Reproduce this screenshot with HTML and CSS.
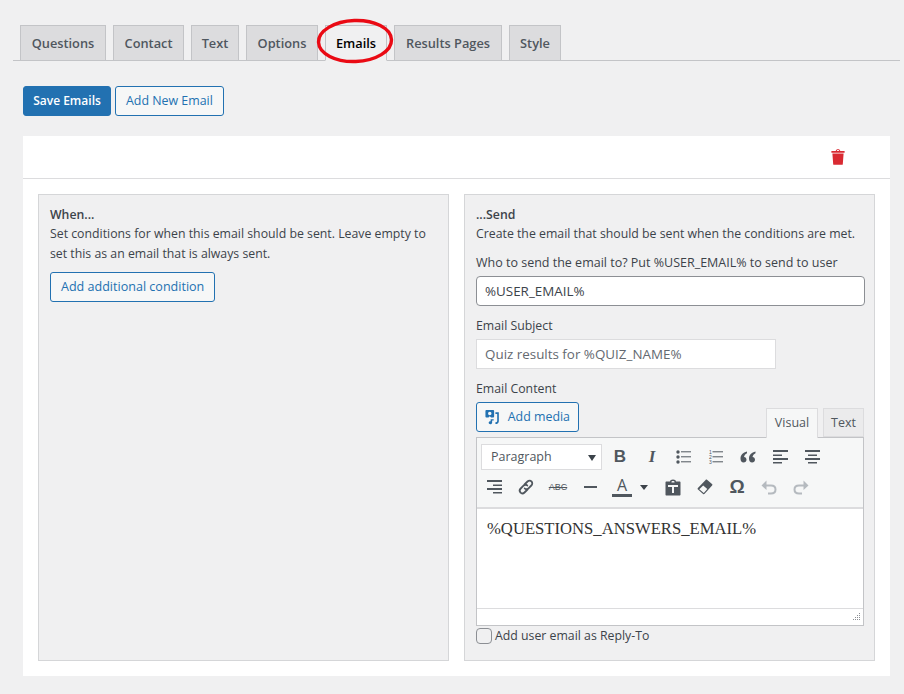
FILE: index.html
```html
<!DOCTYPE html>
<html lang="en">
<head>
<meta charset="utf-8">
<title>Emails</title>
<link rel="stylesheet" href="styles.css">
</head>
<body>
<nav class="tabs">
  <a class="tab t-questions">Questions</a>
  <a class="tab t-contact">Contact</a>
  <a class="tab t-text">Text</a>
  <a class="tab t-options">Options</a>
  <a class="tab t-emails active">Emails</a>
  <a class="tab t-results">Results Pages</a>
  <a class="tab t-style">Style</a>
</nav>
<svg class="circle" width="84" height="52" viewBox="0 0 84 52"><ellipse cx="41" cy="25" rx="36.5" ry="20.5" transform="rotate(-2 41 25)" fill="none" stroke="#ea0a14" stroke-width="3.4"/></svg>
<div class="actions">
  <button class="btn primary">Save Emails</button>
  <button class="btn">Add New Email</button>
</div>
<section class="card">
  <header class="card-head">
    <svg class="trash" width="14" height="16" viewBox="0 0 14 16"><path fill="#d92a32" fill-rule="evenodd" d="M4.800 1.800C4.800.7 5.700.2 7 .2s2.200.5 2.200 1.600V2h4.400v1.800H.4V2h4.400zM5.800 2h2.400v-.2C8.200 1.200 7.600 1 7 1s-1.200.2-1.200.8zM1.400 4.600h11.200l-.8 10.600c0 .4-.3.6-.7.6H2.900c-.4 0-.7-.2-.7-.6z"/></svg>
  </header>
  <div class="card-body">
    <div class="panel">
      <div class="strong">When...</div>
      <p class="para">Set conditions for when this email should be sent. Leave empty to set this as an email that is always sent.</p>
      <button class="btn cond">Add additional condition</button>
    </div>
    <div class="panel">
      <div class="strong">...Send</div>
      <p class="para">Create the email that should be sent when the conditions are met.</p>
      <label class="label first">Who to send the email to? Put %USER_EMAIL% to send to user</label>
      <input class="field full" type="text" value="%USER_EMAIL%">
      <label class="label">Email Subject</label>
      <input class="field subject" type="text" placeholder="Quiz results for %QUIZ_NAME%">
      <label class="label">Email Content</label>
      <div class="editor-top">
        <button class="btn media">
          <svg width="17" height="18" viewBox="0 0 17 18"><path fill="#2271b1" fill-rule="evenodd" d="M1.500 1h8c.6 0 1 .4 1 1v6.500c0 .6-.4 1-1 1H7L5.500 8 4 9.500H1.500c-.6 0-1-.4-1-1V2c0-.6.4-1 1-1zM5.500 3a2 2 0 1 0 .01 4 2 2 0 0 0-.01-4zM6.500 11.500h3.500V13H8.200v2.500c0 1-.9 1.800-2 1.800s-2-.7-2-1.600.9-1.700 2-1.700l.3.000z"/><path fill="none" stroke="#2271b1" stroke-width="1.900" d="M12 4.500h3v9c0 1.600-1 2.600-3 2.600"/></svg>
          Add media
        </button>
        <div class="mode">
          <span class="mode-tab on">Visual</span>
          <span class="mode-tab">Text</span>
        </div>
      </div>
      <div class="editor">
        <div class="toolbar">
          <div class="row">
            <div class="select">Paragraph<i class="caret"></i></div>
            <span class="tool bold">B</span>
            <span class="tool ital">I</span>
            <span class="tool"><svg width="16" height="14" viewBox="0 0 16 14"><g fill="#50575e"><circle cx="2" cy="2" r="1.700"/><circle cx="2" cy="7" r="1.700"/><circle cx="2" cy="12" r="1.700"/><rect x="5" y="1.300" width="10" height="1"/><rect x="5" y="6.300" width="10" height="1"/><rect x="5" y="11.300" width="10" height="1"/></g></svg></span>
            <span class="tool"><svg width="16" height="14" viewBox="0 0 16 14"><g fill="#50575e"><rect x="4.500" y="1.300" width="10.500" height="1"/><rect x="4.500" y="6.300" width="10.500" height="1"/><rect x="4.500" y="11.300" width="10.500" height="1"/></g><g fill="#50575e" font-family="Liberation Sans" font-size="5"><text x="1" y="4">1</text><text x="1" y="9">2</text><text x="1" y="14">3</text></g></svg></span>
            <span class="tool"><svg width="16" height="12" viewBox="0 0 16 12"><path fill="#50575e" d="M7 .5C3 1.500.5 4 .5 7.500c0 2.500 1.200 4 3.100 4 1.700 0 2.900-1.100 2.900-2.700 0-1.500-1-2.600-2.500-2.700C4.300 4.500 5.300 3 7 2.300zM15.500.5c-4 1-6.500 3.500-6.500 7 0 2.500 1.200 4 3.100 4 1.700 0 2.900-1.100 2.900-2.700 0-1.500-1-2.600-2.500-2.700.3-1.600 1.300-3.100 3-3.800z"/></svg></span>
            <span class="tool"><svg width="15" height="14" viewBox="0 0 15 14"><path fill="#50575e" d="M0 0h15v2H0zM0 4.500h9V6H0zM0 8h15v2H0zM0 12h9v1.500H0z"/></svg></span>
            <span class="tool"><svg width="15" height="14" viewBox="0 0 15 14"><path fill="#50575e" d="M0 0h15v2H0zM3 4.500h9V6H3zM0 8h15v2H0zM3 12h9v1.500H3z"/></svg></span>
          </div>
          <div class="row second">
            <span class="tool"><svg width="15" height="14" viewBox="0 0 15 14"><path fill="#50575e" d="M0 0h15v2H0zM6 4.500h9V6H6zM0 8h15v2H0zM6 12h9v1.500H6z"/></svg></span>
            <span class="tool"><svg width="18" height="18" viewBox="0 0 18 18"><g fill="none" stroke="#50575e" stroke-width="1.800" stroke-linecap="round"><path d="M7.500 6.500l3-3c1.300-1.300 3-1.300 4 0 1.100 1.100 1 2.800-.2 4l-2.800 2.800c-1.200 1.200-2.900 1.200-3.800.2"/><path d="M10.500 11.500l-3 3c-1.300 1.300-3 1.300-4 0-1.100-1.100-1-2.800.2-4l2.800-2.800c1.200-1.200 2.900-1.200 3.800-.2"/></g></svg></span>
            <span class="tool strike">ABC</span>
            <span class="tool"><i class="hr"></i></span>
            <span class="tool color">A</span>
            <i class="caret small"></i>
            <span class="tool"><svg width="16" height="17" viewBox="0 0 16 17"><path fill="#50575e" fill-rule="evenodd" d="M1.500 2.500H5C5 1.300 6.300.5 8 .5s3 .8 3 2h3.500c.6 0 1 .4 1 1v12c0 .6-.4 1-1 1h-13c-.6 0-1-.4-1-1v-12c0-.6.4-1 1-1zM6.500 2.500v1h3v-1c0-.3-.6-.6-1.500-.6s-1.500.3-1.500.6zM3 6v2h4v6h2V8h4V6z"/></svg></span>
            <span class="tool"><svg width="16" height="16" viewBox="0 0 16 16"><path fill="#50575e" fill-rule="evenodd" d="M10 .8l5 4.200c.5.400.5 1 .1 1.500l-7.500 8.300c-.4.400-1 .5-1.500.100L1 10.500c-.5-.4-.6-1.100-.1-1.600l7.700-8c.4-.4 1-.5 1.400-.1zM6.200 6.400L2.300 10.200 6.800 14l3.500-3.900z"/></svg></span>
            <span class="tool omega">Ω</span>
            <span class="tool"><svg width="16" height="15" viewBox="0 0 16 15"><path fill="none" stroke="#b5babf" stroke-width="2" d="M3 5.500h7c3 0 4.500 1.700 4.500 4s-1.500 4-4.500 4H7"/><path fill="#b5babf" d="M5.500.5v9.500L.500 5.500z"/></svg></span>
            <span class="tool"><svg width="16" height="15" viewBox="0 0 16 15"><path fill="none" stroke="#b5babf" stroke-width="2" d="M13 5.500H6c-3 0-4.500 1.700-4.500 4s1.500 4 4.500 4h3"/><path fill="#b5babf" d="M10.500.5v9.500l5-4.500z"/></svg></span>
          </div>
        </div>
        <div class="content">%QUESTIONS_ANSWERS_EMAIL%</div>
        <div class="status"><svg width="10" height="10" viewBox="0 0 10 10"><g fill="#8c8f94"><rect x="8" y="0" width="1" height="1"/><rect x="6" y="2" width="1" height="1"/><rect x="8" y="2" width="1" height="1"/><rect x="4" y="4" width="1" height="1"/><rect x="6" y="4" width="1" height="1"/><rect x="8" y="4" width="1" height="1"/><rect x="2" y="6" width="1" height="1"/><rect x="4" y="6" width="1" height="1"/><rect x="6" y="6" width="1" height="1"/><rect x="8" y="6" width="1" height="1"/></g></svg></div>
      </div>
      <label class="reply"><input class="check" type="checkbox">Add user email as Reply-To</label>
    </div>
  </div>
</section>
</body>
</html>
```
FILE: styles.css
```css
* { box-sizing: border-box; }
html, body { margin: 0; padding: 0; }
body {
  position: relative;
  height: 694px;
  overflow: hidden;
  background: #f0f0f1;
  color: #3c434a;
  font-family: "Open Sans", "Noto Sans", sans-serif;
  font-size: 12.300px;
  line-height: 20px;
}
.tabs {
  display: flex;
  gap: 7px;
  margin: 25px 4px 0 13px;
  padding-left: 7px;
  height: 36px;
  border-bottom: 1px solid #c3c4c7;
}
.tab {
  height: 36px;
  padding: 7px 0;
  background: #dcdcde;
  border: 1px solid #c3c4c7;
  color: #50575e;
  font-weight: 600;
  font-size: 12.800px;
  text-align: center;
  white-space: nowrap;
}
.t-questions { width: 86px; }
.t-contact { width: 71px; }
.t-text { width: 48px; }
.t-options { width: 72px; }
.t-emails { width: 62px; }
.t-results { width: 108px; }
.t-style { width: 52px; }
.tab.active {
  background: #f0f0f1;
  border-bottom-color: #f0f0f1;
  color: #000;
}
.circle { position: absolute; left: 314px; top: 16px; }
.actions { display: flex; gap: 4px; margin: 25px 0 0 23px; }
.btn {
  height: 30px;
  padding: 0 10px;
  background: #f6f7f7;
  border: 1px solid #2271b1;
  border-radius: 3px;
  color: #2271b1;
  font: inherit;
  font-size: 12.400px;
  white-space: nowrap;
}
.btn.primary {
  width: 88px;
  padding: 0;
  background: #2271b1;
  color: #fff;
  font-size: 12px;
  font-weight: 600;
}
.card {
  width: 867px;
  height: 540px;
  margin: 20px 0 0 23px;
  background: #fff;
}
.card-head {
  display: flex;
  justify-content: flex-end;
  align-items: center;
  height: 43px;
  padding: 0 45px 0 0;
  border-bottom: 1px solid #dcdcde;
}
.card-body { display: flex; gap: 15px; padding: 15px; height: 497px; }
.panel {
  width: 411px;
  height: 467px;
  padding: 10px 10px 0 11px;
  background: #f0f0f1;
  border: 1px solid #d5d6d8;
}
.strong { font-weight: 600; }
.para { margin: -1px 0 0; }
.btn.cond { margin-top: 8px; font-size: 12.550px; }
.label { display: block; margin-top: 10px; line-height: 20px; }
.label.first { margin-top: 9px; font-size: 12.500px; }
.field {
  display: block;
  height: 30px;
  padding: 0 8px;
  border: 1px solid #8c8f94;
  border-radius: 4px;
  background: #fff;
  color: #3c434a;
  font: inherit;
  font-size: 13.400px;
  outline: none;
}
.field.full { width: 389px; margin-top: 3px; }
.field.subject { width: 300px; margin-top: 3px; border: 1px solid #dcdcde; border-radius: 0; }
.field::placeholder { color: #646970; opacity: 1; }
.editor-top { display: flex; justify-content: space-between; align-items: flex-start; width: 388px; height: 35px; margin-top: 3px; }
.media { display: flex; align-items: center; gap: 8px; width: 103px; padding: 0 8px; }
.mode { display: flex; gap: 5px; margin-top: 6px; }
.mode-tab {
  display: block;
  width: 41px;
  height: 29px;
  background: #ebebec;
  border: 1px solid #dcdcde;
  color: #50575e;
  font-size: 12.500px;
  line-height: 28px;
  text-align: center;
}
.mode-tab.on {
  position: relative;
  z-index: 1;
  width: 52px;
  height: 30px;
  background: #f6f7f7;
  border-bottom: 0;
}
.editor {
  width: 388px;
  height: 189px;
  border: 1px solid #c3c4c7;
  background: #fff;
  display: flex;
  flex-direction: column;
}
.toolbar {
  height: 71px;
  padding: 4px 4px 0;
  background: #f6f7f7;
  border-bottom: 2px solid #dcdcde;
}
.row { display: flex; align-items: center; height: 30px; }
.second { margin-left: -3px; }
.select {
  position: relative;
  width: 121px;
  height: 26px;
  padding: 2px 9px;
  margin-right: 2px;
  background: #fff;
  border: 1px solid #dcdcde;
  color: #50575e;
  font-size: 12.500px;
}
.caret {
  display: block;
  width: 0;
  height: 0;
  border-left: 4.500px solid transparent;
  border-right: 4.500px solid transparent;
  border-top: 6px solid #3c434a;
}
.select .caret { position: absolute; right: 5px; top: 10px; }
.caret.small { margin: 0 9px 0 2px; border-left-width: 4px; border-right-width: 4px; border-top-width: 5px; }
.tool {
  position: relative;
  display: flex;
  align-items: center;
  justify-content: center;
  width: 32px;
  height: 30px;
  flex: none;
  color: #50575e;
}
.bold { font: 700 17px "Liberation Sans", sans-serif; }
.ital { font: italic 700 17px "Liberation Serif", serif; }
.strike { font: 9px "Liberation Sans", sans-serif; text-decoration: line-through; }
.hr { display: block; width: 13px; height: 2px; background: #50575e; }
.color {
  align-items: flex-start;
  padding-top: 4px;
  font: 16px "Open Sans", sans-serif;
  line-height: 18px;
}
.color::after {
  content: "";
  position: absolute;
  left: 6px;
  top: 22px;
  width: 20px;
  height: 3px;
  background: #50575e;
}
.omega { font: 700 19px "Liberation Sans", sans-serif; }
.content {
  height: 99px;
  padding: 7px 10px;
  font: 16.650px "Liberation Serif", serif;
  line-height: 26px;
  color: #333;
}
.status {
  display: flex;
  justify-content: flex-end;
  align-items: flex-end;
  height: 17px;
  padding: 0 2px 2px 0;
  border-top: 1px solid #dcdcde;
}
.reply { display: flex; align-items: center; gap: 3px; height: 20px; }
.check {
  appearance: none;
  width: 16px;
  height: 16px;
  margin: 0;
  background: #fff0;
  border: 1px solid #8c8f94;
  border-radius: 4px;
}
```
